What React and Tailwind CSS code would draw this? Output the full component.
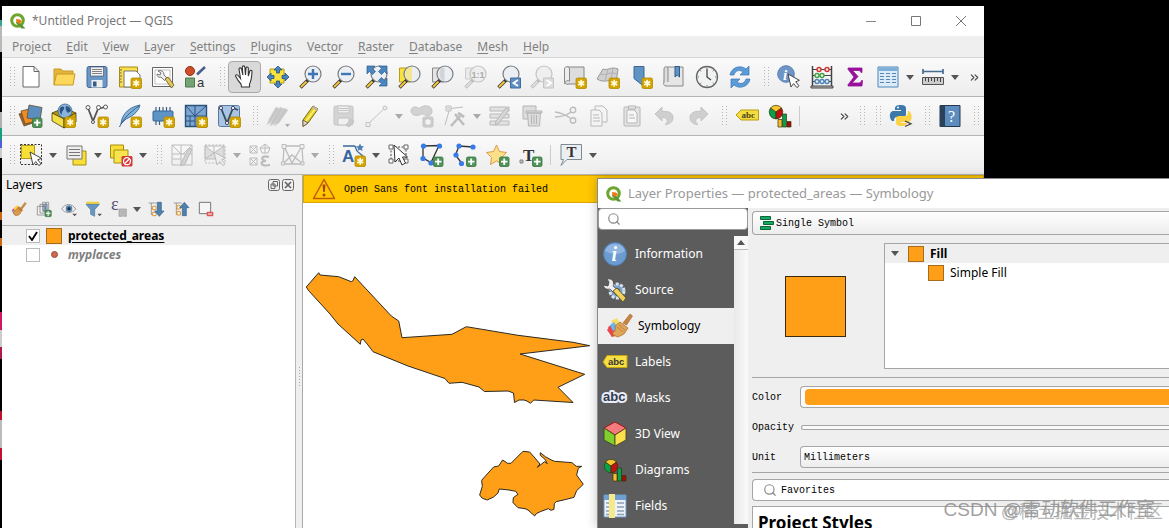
import { ChevronsRight, Search } from "lucide-react";

const ORANGE = "#ff9e17";

// small overlays that sit in the lower right corner of an icon
const NewBadge = () => (
  <g>
    <rect x="13" y="13" width="10.5" height="10.5" rx="1.5" fill="#d4a500" stroke="#b28a00" strokeWidth=".8" />
    <path d="M18.2 14.8v7M15.2 16.5l6 3.5M21.2 16.5l-6 3.5" stroke="#fffbe0" strokeWidth="1.7" />
  </g>
);

const PlusBadge = () => (
  <g>
    <rect x="13.5" y="14" width="9.5" height="9.5" rx="1.5" fill="#4f9358" stroke="#36723f" strokeWidth=".8" />
    <path d="M18.2 15.5v6.5M15 18.7h6.5" stroke="#fff" strokeWidth="1.8" />
  </g>
);

const Lens = ({ faded, children }) => (
  <g>
    <path d="M1.5 22.5 9 15" stroke={faded ? "#bbb" : "#333"} strokeWidth="3.4" />
    <path d="M2 22 7.5 16.5" stroke={faded ? "#ddd" : "#f5c73d"} strokeWidth="2" />
    <circle cx="14" cy="9" r="8" fill={faded ? "#eee" : "#e9eef2"} fillOpacity=".8" stroke={faded ? "#c4c4c4" : "#7a7d80"} strokeWidth="1.2" />
    {children}
  </g>
);

const Cursor = ({ faded }) => (
  <path d="m11 9 3 13 2.6-3.4 3.3 4 2.1-1.8-3.3-4 3.7-1.5z" fill={faded ? "#eee" : "#fff"} stroke={faded ? "#bbb" : "#444"} strokeWidth="1" />
);

const Diagram = () => (
  <g stroke="#34330b" strokeWidth=".7">
    <path d="M8 8V15A7 7 0 0 1 2.5 4z" fill="#08a04b" />
    <path d="M8 8 2.5 4a7 7 0 0 1 11 0z" fill="#fbc52d" />
    <path d="m8 8 5.5-4a7 7 0 0 1-5.5 11z" fill="#c01212" />
    <path d="M10 15.500h4V23h-4z" fill="#fbb92d" />
    <path d="M14.500 10h4v13h-4z" fill="#08a04b" />
    <path d="M19 17.500h4V23h-4z" fill="#a90b0b" />
  </g>
);

const Tag = () => (
  <g>
    <path d="m1 11 5-5h17.500v10H6z" fill="#f4dd3c" stroke="#b79b12" />
    <text x="6.500" y="14" fontSize="9" fontWeight="700" fontFamily="Liberation Serif, serif" fill="#4a4420">abc</text>
  </g>
);

const Broom = () => (
  <g>
    <path d="m1 14 7-6 3 10-5 4z" fill="#f05050" />
    <path d="m4 11 6-5 4 8-5 5z" fill="#fcd545" />
    <path d="m2 16 5 6 3-2-5-7z" fill="#6eb3e8" />
    <path d="m9 11 6 7-5 4c-3 0-6-2-7-4z" fill="#d99a49" stroke="#a86a24" strokeWidth=".7" />
    <path d="m9 10 3-2 6 6-3 3z" fill="#c67a31" />
    <path d="m14 11 7-9 2 2-7 9z" fill="#d2924a" stroke="#9b6225" strokeWidth=".6" />
  </g>
);

// brush over colour swatches, as on the dialog's page list
const BrushSwatches = () => (
  <g>
    <path d="m2 13 6-4 5 12-7 2z" fill="#f05555" />
    <path d="m5 7 6-3 5 9-6 4z" fill="#fbdc62" />
    <path d="m1 16 4-5 5 8-4 4z" fill="#e8474f" />
    <path d="m4 11 4-3 4 6-5 3z" fill="#69b8ef" />
    <path d="m9 12 5-4 8 6-4 6-6 3c-3-1-5-2-6-4 3-1 4-4 3-7z" fill="#dfa65a" stroke="#a86a24" strokeWidth=".7" />
    <path d="m11 13 6 5M13 11l6 5" stroke="#b97a35" strokeWidth=".8" />
    <path d="m17 9 7-9 2.500 2-6 9z" fill="#c98540" stroke="#9b6225" strokeWidth=".6" />
  </g>
);

const InfoDisc = () => (
  <g>
    <circle cx="12" cy="12" r="11.5" fill="#6b9bd1" stroke="#4f7fb8" />
    <path d="M2 9a10.500 10.500 0 0 1 20 0c-5 4-14 4-20 0z" fill="#8fb5e0" />
    <text x="8.500" y="19" fontSize="20" fontWeight="700" fontStyle="italic" fontFamily="Liberation Serif, serif" fill="#fff">i</text>
  </g>
);

const ICONS = {
  "New Project": <path d="M4 1.500h11l5 5v15.500H4zM15 1.500v5h5" fill="#fff" stroke="#666" />,
  "Open Project": (
    <g stroke="#c89b25">
      <path d="M2 20V4h7l2 2h10v4" fill="#e4b53c" />
      <path d="m2 20 2.500-11H23l-2 11z" fill="#fcd75c" />
    </g>
  ),
  "Save Project": (
    <g>
      <rect x="2" y="1.500" width="20" height="21" rx="2" fill="#6b97c4" stroke="#426a96" />
      <path d="M5.500 2h13v9h-13z" fill="#f2f2f2" stroke="#446" strokeWidth=".6" />
      <path d="M7 4.500h10M7 6.500h10M7 8.500h10" stroke="#666" strokeWidth=".8" />
      <path d="M6.500 15h11v7.500h-11z" fill="#eee" />
      <path d="M8 16.500h3.500v5H8z" fill="#355c86" />
    </g>
  ),
  "New Print Layout": (
    <g>
      <path d="M1.500 2h18v20h-18z" fill="#fcdf4c" stroke="#a58b16" />
      <path d="M6 6h12l4 4v12H6z" fill="#fff" stroke="#777" />
      <path d="M2 5h2M2 8h1.500M2 11h2M2 14h1.500M2 17h2" stroke="#665" />
      <NewBadge />
    </g>
  ),
  "Layout Manager": (
    <g>
      <path d="M1.500 2.500h20v19h-20z" fill="#fff" stroke="#666" />
      <path d="M4 5h15v14H4z" fill="none" stroke="#999" strokeWidth=".6" />
      <path d="M7 6c3-1 6 0 6 4l3 3-2.500 2.500L10 12c-3 1-4-1-4-3l3 1 1-2z" fill="#eee" stroke="#555" strokeWidth=".8" />
      <path d="m14 14 3-2 6 8-2.500 3z" fill="#e5c75c" stroke="#604f17" strokeWidth=".8" />
    </g>
  ),
  "Style Manager": (
    <g>
      <circle cx="6" cy="6" r="4.500" fill="#cc4d28" stroke="#8e3317" />
      <path d="M13 9.500 21 2" stroke="#4b5f8a" strokeWidth="2.600" />
      <path d="M1.500 13h9v9h-9z" fill="#74a374" stroke="#4c784c" />
      <text x="13" y="22" fontSize="13" fontFamily="Liberation Sans, sans-serif" fill="#333">a</text>
    </g>
  ),
  "Pan Map": (
    <path
      d="M8.500 22 8 19c-2-2-4-5-5.500-8 0-1.500 2-1.800 3 0l2 2.500L6 4c.2-1.600 2.200-1.500 2.500 0l1.300 6-.5-8c.2-1.500 2.300-1.500 2.500 0l.7 8 .5-7c.2-1.400 2.200-1.300 2.300 0v8l1.500-5c.6-1.200 2.200-.8 2.200.6-.3 5-.5 9-2.500 12.400v3z"
      fill="#fff" stroke="#333" strokeWidth="1.100"
    />
  ),
  "Pan Map to Selection": (
    <g>
      <path d="M4 4h14v14H4z" fill="#fbe13c" stroke="#b59e13" />
      <path d="m12 1 4 4h-2.500v3h-3V5H8zM12 23l-4-4h2.500v-3h3v3H16zM1 12l4-4v2.500h3v3H5V16zM23 12l-4 4v-2.500h-3v-3h3V8z" fill="#4a86c0" stroke="#23507f" strokeWidth=".8" />
    </g>
  ),
  "Zoom In": <Lens><path d="M14 4v10M9 9h10" stroke="#3c76b4" strokeWidth="2.400" /></Lens>,
  "Zoom Out": <Lens><path d="M9 9h10" stroke="#3c76b4" strokeWidth="2.400" /></Lens>,
  "Zoom Full": (
    <Lens>
      <path d="M2 1h8L7.500 3.500l3 3-3 3-3-3L2 9zM22 1v8l-2.500-2.500-3 3-3-3 3-3L14 1zM22 21v-8l-2.500 2.500-3-3-3 3 3 3L14 21z" fill="#4a86c0" stroke="#2a5c8e" strokeWidth=".7" />
    </Lens>
  ),
  "Zoom to Selection": (
    <g><path d="M1.500 3h11v14h-11z" fill="#fbe13c" stroke="#b59e13" /><Lens><path d="M8 7c1-4 4-5 6-5v14c-4 0-6-3-6-9z" fill="#f3e68c" /></Lens></g>
  ),
  "Zoom to Layer": (
    <g><path d="M1.500 3h11v14h-11z" fill="#e4e4e4" stroke="#888" /><Lens><path d="M8.500 7c1-4 4-4.500 5-4.500v13c-4 0-5-4-5-8.500z" fill="#d2d4d6" /></Lens></g>
  ),
  "Zoom to Native Resolution": (
    <g>
      <path d="M1.500 3h9v11h-9z" fill="#eaeaea" stroke="#ccc" />
      <Lens faded><text x="7.500" y="12.500" fontSize="9" fontWeight="700" fontFamily="Liberation Sans, sans-serif" fill="#aaa">1:1</text></Lens>
    </g>
  ),
  "Zoom Last": (
    <Lens><path d="M13.500 13h10v10h-10z" fill="#5f8fc2" stroke="#3e6ea0" /><path d="m21 15-4.500 3 4.500 3" fill="none" stroke="#fff" strokeWidth="1.800" /></Lens>
  ),
  "Zoom Next": (
    <Lens faded><path d="M13.500 13h10v10h-10z" fill="#ddd" stroke="#c4c4c4" /><path d="m16.500 15 4.500 3-4.500 3" fill="none" stroke="#fff" strokeWidth="1.800" /></Lens>
  ),
  "New Map View": (
    <g stroke="#888">
      <path d="M4 2h17v17H6c-3 1-5-1-4-3z" fill="#ddd" />
      <path d="M1.500 17V4c0-3 5-3 5 0v12c-2-1-5 0-5 3" fill="#eee" />
      <NewBadge />
    </g>
  ),
  "New 3D Map View": (
    <g stroke="#999">
      <path d="M7 4c5 2 8-3 15 0l-2 13c-7-4-11 2-19-3z" fill="#d0d0d0" />
      <path d="M4 9c6 2 10-3 17 0M12 4l-3 12M17 3l-2 12" fill="none" stroke="#b0b0b0" />
      <NewBadge />
    </g>
  ),
  "New Spatial Bookmark": <g><path d="M5 1.500h10v20l-5-4-5-4z" fill="#5f93c4" stroke="#3a6895" /><NewBadge /></g>,
  "Show Spatial Bookmarks": (
    <g stroke="#888">
      <path d="M5 2h16v19H4c-2 0-3-2-2-4z" fill="#e6e6e6" />
      <path d="M2 17V4c0-3 4-3 4 0v13" fill="#ddd" />
      <path d="M13 1.500h4.500V12l-2.200-2L13 12z" fill="#5f93c4" stroke="#2f5a86" />
    </g>
  ),
  "Temporal Controller": (
    <g>
      <circle cx="12" cy="12" r="10.500" fill="#f1f3f3" stroke="#666" strokeWidth="1.300" />
      <path d="M12 4v8l4 3" fill="none" stroke="#444" strokeWidth="1.300" />
      <path d="M12 2.500v1.500M12 20v1.500M2.500 12H4M20 12h1.500M5.300 5.300l1 1M18.700 5.300l-1 1M5.300 18.700l1-1M18.700 18.700l-1-1" stroke="#777" />
    </g>
  ),
  Refresh: (
    <g fill="#5b9bd8" stroke="#3a74b4" strokeWidth=".7">
      <path d="M2 10C3 3 12-1 18 4l3-3v9h-9l3-3c-4-3-8-1-9 3z" />
      <path d="M22 14c-1 7-10 11-16 6l-3 3v-9h9l-3 3c4 3 8 1 9-3z" />
    </g>
  ),
  "Identify Features": (
    <g>
      <circle cx="9" cy="9" r="8.300" fill="#6e95c6" stroke="#5680b3" />
      <text x="6" y="14.500" fontSize="15" fontWeight="700" fontStyle="italic" fontFamily="Liberation Serif, serif" fill="#fff">i</text>
      <Cursor />
    </g>
  ),
  "Field Calculator": (
    <g fill="none" stroke="#444">
      <path d="M2.500 1v20M21.500 1v20" strokeWidth="1.500" />
      <path d="M1 21h22v2H1z" fill="#bbb" />
      <path d="M3 4.500h18M3 10.500h18M3 16.500h18" />
      <g stroke="#d33232" fill="#fce4e4" strokeWidth="1.400"><circle cx="9" cy="4.500" r="2" /><circle cx="17" cy="4.500" r="2" /></g>
      <g stroke="#43a047" fill="#e6f5e6" strokeWidth="1.400"><circle cx="7" cy="10.500" r="2" /><circle cx="12" cy="10.500" r="2" /></g>
      <g stroke="#4f83b5" fill="#e4eef8" strokeWidth="1.400"><circle cx="7" cy="16.500" r="2" /><circle cx="12" cy="16.500" r="2" /><circle cx="17" cy="16.500" r="2" /></g>
    </g>
  ),
  "Statistical Summary": <path d="M5 3h14v4.500h-1c-.5-1.500-1.300-2-3-2H9.500l5.500 6L9 18h6.500c2 0 2.600-1 3-2.500h1L19 21H5v-1.200L11 12 5 4.200z" fill="#98109c" stroke="#98109c" strokeWidth=".8" />,
  "Open Attribute Table": (
    <g>
      <path d="M2 2h20v20H2z" fill="#dcebf8" stroke="#4b85bb" />
      <path d="M2.500 2.500h19v3.500h-19z" fill="#7faed9" />
      <path d="M4 8.500h4M10 8.500h4M16 8.500h4M4 11.500h4M10 11.500h4M16 11.500h4M4 14.500h4M10 14.500h4M16 14.500h4M4 17.500h4M10 17.500h4M16 17.500h4" stroke="#5686b4" />
    </g>
  ),
  "Measure Line": (
    <g>
      <path d="M2.500 6.500h19M2 4v5M22 4v5" stroke="#456c91" strokeWidth="1.700" />
      <path d="M1.500 12.500h21v7h-21z" fill="#ccc" stroke="#555" />
      <path d="M4.500 13v3M7.500 13v4M10.500 13v3M13.500 13v4M16.500 13v3M19.500 13v4" stroke="#444" />
    </g>
  ),
  "Data Source Manager": (
    <g stroke="#604e32" strokeWidth=".8">
      <path d="m0 10 9-4 5 13-9 3z" fill="#a7611f" />
      <path d="m2 7 12-3 4 13-12 3z" fill="#f08d22" />
      <path d="m10 1 13 2.500-2 13L8 14z" fill="#5b8dbd" />
      <PlusBadge />
    </g>
  ),
  "New Geopackage Layer": (
    <g stroke="#453d10" strokeWidth=".8">
      <path d="m0 9 12-5 12 5-12 7z" fill="#b8940c" />
      <circle cx="13" cy="7" r="7" fill="#8ab4de" stroke="#3d6288" />
      <path d="M8 4c3-3 5-1 4 1s-3 3-2 6c-2-1-3-4-2-7zM14 2c3 0 5 3 5 5l-3 2c-2-2-3-4-2-7z" fill="#2d5580" stroke="none" />
      <path d="m0 9 12 6v9L0 17z" fill="#f3de45" />
      <path d="m24 9-12 6v9l12-6z" fill="#d3ac10" />
      <NewBadge />
    </g>
  ),
  "New Shapefile Layer": (
    <g>
      <path d="m3 4 5 13 5-12 7-2" fill="none" stroke="#555" strokeWidth="1.800" />
      <g fill="#fff" stroke="#555"><circle cx="3" cy="3.500" r="2" /><circle cx="13.500" cy="3.500" r="2" /><circle cx="20.500" cy="3" r="2" /><circle cx="8" cy="18" r="1.500" /></g>
      <NewBadge />
    </g>
  ),
  "New SpatiaLite Layer": (
    <g>
      <path d="M3 20C4 9 12 3 22 1c-1 5-5 10-14 14z" fill="#83b2dc" stroke="#41709d" />
      <path d="M1.500 23C5 15 12 8 21 2" fill="none" stroke="#345f89" />
      <NewBadge />
    </g>
  ),
  "New Temporary Scratch Layer": (
    <g>
      <path d="M5 3v5M8.500 3v5M12 3v5M15.500 3v5M19 3v5M5 16v5M8.500 16v5" stroke="#3e5f83" strokeWidth="1.200" />
      <rect x="2" y="7" width="20" height="10" rx="1" fill="#5e93c6" stroke="#346596" />
      <NewBadge />
    </g>
  ),
  "New Mesh Layer": (
    <g>
      <path d="M1.500 1.500h21v21h-21z" fill="#7ea6d2" stroke="#29517c" strokeWidth="1.400" />
      <path d="M11 1.500v21M1.500 12h21M1.500 1.500 11 12M22 2 11 12M1.500 17H11M6 12v10" fill="none" stroke="#29517c" />
      <NewBadge />
    </g>
  ),
  "New Virtual Layer": (
    <g>
      <rect x="1.500" y="1.500" width="21" height="21" rx="2" fill="#a9c5e3" stroke="#567a9f" />
      <path d="m4 4 6 15 6-15 5 2" fill="none" stroke="#384b5e" strokeWidth="1.800" />
      <g fill="#fff" stroke="#446"><circle cx="4" cy="4" r="1.600" /><circle cx="16" cy="4" r="1.600" /><circle cx="10" cy="19" r="1.600" /></g>
      <NewBadge />
    </g>
  ),
  "Current Edits": (
    <g fill="#c6c6c6" stroke="#d8d8d8" strokeWidth=".6">
      <path d="m1 21 2-6L10 3l4 2L5 18z" /><path d="m4 22 2-6 8-13 4 2-8 14z" /><path d="m8 22 2-5 8-13 4 2-9 13z" />
      <path d="M19 20h5l-2.500 3z" fill="#999" />
    </g>
  ),
  "Toggle Editing": (
    <g>
      <path d="m4 16 10-14 5 3L9 19l-5 3.500z" fill="#e4cd27" stroke="#776a13" />
      <path d="m7 17 10-13" stroke="#fff27b" strokeWidth="1.500" />
      <path d="m4 16 5 3-5 3.500z" fill="#e8d6b4" stroke="#555" strokeWidth=".8" />
      <path d="m14 2 5 3-1 2-5-3z" fill="#c0b7ac" />
    </g>
  ),
  "Save Layer Edits": (
    <g stroke="#c4c4c4">
      <rect x="2" y="2" width="19" height="19" rx="1.500" fill="#d4d4d4" />
      <path d="M6 2h11v7H6zM6 14h11v7H6z" fill="#f0f0f0" /><path d="M7 4.500h9M7 6.500h9" />
      <path d="m14 21 5-6 3 2-5 6z" fill="#c9c9c9" />
    </g>
  ),
  "Digitize with Segment": (
    <g stroke="#c2c2c2" fill="#eee"><path d="m3 20 17-16" /><path d="M1 18.500h4v4H1z" /><circle cx="20" cy="4" r="2" /></g>
  ),
  "Add Record": (
    <g fill="#d2d2d2" stroke="#c4c4c4">
      <path d="M1 7c0-4 4-5 7-3 2 1 4-3 9-2 6 0 7 9 1 10-3 0-4-3-7-2-4 3-10 1-10-3z" />
      <rect x="13" y="13" width="10" height="10" rx="1.500" fill="#ccc" /><path d="M18 15v6M15.500 16.500l5 3M20.500 16.500l-5 3" stroke="#f5f5f5" strokeWidth="1.500" />
    </g>
  ),
  "Vertex Tool": (
    <g fill="none" stroke="#bdbdbd">
      <path d="M3 2h5v5H3zM8 4.500 20 3M6 7 2 21" /><circle cx="5.500" cy="4.500" r="1" />
      <path d="m8 22 9-10M12 10l9 11" strokeWidth="2.500" /><path d="m15 9 6 4" strokeWidth="3" />
    </g>
  ),
  "Modify Attributes": (
    <g fill="#e2e2e2" stroke="#b9b9b9"><path d="M2 3h19v4H2zM2 10h19v4H2zM2 17h19v4H2z" /><path d="m8 17 10-13 3 2-10 13-4 2z" fill="#d6d6d6" /></g>
  ),
  "Delete Selected": (
    <g fill="#ddd" stroke="#b5b5b5"><path d="M2 2h13v13H2z" /><path d="M5 7h16v2H5zM6.500 9h13l-1 13h-11zM10.500 11v9M13 11v9M15.500 11v9" /></g>
  ),
  "Cut Features": (
    <g fill="none" stroke="#bdbdbd" strokeWidth="1.400"><path d="M1 8c7 1 11 3 15 6M1 13c7 0 12-2 16-5" /><circle cx="19" cy="6" r="2.700" /><circle cx="19" cy="16.500" r="2.700" /></g>
  ),
  "Copy Features": (
    <g fill="#f4f4f4" stroke="#b9b9b9"><path d="M8 2h8l4 4v12H8z" /><path d="M4 6h8l3 3v13H4zM6 11h6M6 14h7M6 17h7" /></g>
  ),
  "Paste Features": (
    <g fill="#e4e4e4" stroke="#b5b5b5"><rect x="4" y="3" width="16" height="19" rx="1" /><path d="M7 6h7l3 3v10H7z" fill="#f6f6f6" /><path d="M8.500 2h7v3h-7zM9 11h5M9 14h6" /></g>
  ),
  Undo: <path d="m2 10 7-7v4.500c7-1 11 2 11 6 0 4-3 7-8 7 3-2 4-7-3-7V17z" fill="#cfcfcf" stroke="#c4c4c4" />,
  Redo: <path d="m22 10-7-7v4.500c-7-1-11 2-11 6 0 4 3 7 8 7-3-2-4-7 3-7V17z" fill="#cfcfcf" stroke="#c4c4c4" />,
  "Layer Labeling": <Tag />,
  "Layer Diagrams": <Diagram />,
  "Python Console": (
    <g>
      <path d="M11 1c5 0 6 1 6 4v5c0 2-1 3-3 3H8c-2 0-3 1-3 4H3c-3-3-3-9 1-10h8V6H6V4c0-2 2-3 5-3z" fill="#3c78a9" />
      <path d="M13 22c-5 0-6-1-6-4v-3c0-2 1-3 3-3h6c2 0 3-1 3-5h1c3 2 4 9 0 11h-8v1h6c0 2-2 3-5 3z" fill="#fdd244" />
      <circle cx="9" cy="3.500" r="1" fill="#fff" />
      <path d="m16 17 6 2.800-6 2.700" fill="none" stroke="#444" strokeWidth="1.300" />
    </g>
  ),
  "Help Contents": (
    <g>
      <path d="M2 1.500h20v21H2z" fill="#5d8cbe" stroke="#25384d" /><path d="M2 1.500h5v21H2z" fill="#2b4159" />
      <text x="10" y="18" fontSize="16" fontFamily="Liberation Serif, serif" fill="#fff">?</text>
    </g>
  ),
  "Select Features": (
    <g><path d="M1.500 1.500h21v20h-21z" fill="none" stroke="#333" strokeDasharray="2 1.500" /><path d="M2.500 2.500h13v13h-13z" fill="#f7df37" stroke="#b39c18" /><Cursor /></g>
  ),
  "Select by Value": (
    <g><path d="M9 8h13v14H9z" fill="#f7df37" stroke="#a68d12" /><path d="M3 3h15v13H3z" fill="#eee" stroke="#777" /><path d="M5 6.500h11M5 9.500h11M5 12.500h11" stroke="#777" /></g>
  ),
  "Deselect Features": (
    <g><path d="M1.500 2h13v13h-13z" fill="#f7df37" stroke="#a68d12" /><path d="M5 7h14v13H5z" fill="#f9e44d" stroke="#a68d12" /><rect x="12.500" y="13" width="11" height="10.500" rx="1.500" fill="#d63636" /><circle cx="18" cy="18.200" r="3.500" fill="none" stroke="#fff" strokeWidth="1.300" /><path d="m15.500 20.700 5-5" stroke="#fff" strokeWidth="1.300" /></g>
  ),
  "Edit Mesh": (
    <g fill="none" stroke="#bcbcbc"><path d="M2 2h20v20H2zM2 11h20M11 2v20M2 2l9 9M22 2l-9 9M2 16h9" /><path d="m11 20 8-15 3 1-7 15-4 2z" fill="#d2d2d2" /></g>
  ),
  "Select Mesh": (
    <g fill="none" stroke="#bcbcbc"><path d="M2 2h20v18H2z" strokeDasharray="2 1.500" /><path d="M2 3h19v13H2zM2 3l9 7 10-7M2 16l9-6M11 3v7" fill="#ddd" /><Cursor faded /></g>
  ),
  "Transform Mesh": (
    <g fill="none" stroke="#bcbcbc"><path d="M2 3h7v7H2zM2 3l7 7M9 3l-7 7M2 15h7v7H2zM2 15l7 7M9 15l-7 7M17 1l5 4-2 5h-6l-2-5zM12 5h10M17 1v9" /><path d="M21 14c-8-2-9 3-3 4-7 0-6 6 4 4" strokeWidth="2.200" /></g>
  ),
  "Force by Lines": (
    <g fill="none" stroke="#bcbcbc"><path d="M3 3h18l1 18H2zM3 3l8 17L21 3M2 21l9-9 11 9" strokeWidth="1.300" /><path d="M1 1.500h4v4H1zM19 1.500h4v4h-4zM0.500 19h3v3h-3zM20 19h3v3h-3z" fill="#eee" /></g>
  ),
  "New Annotation Layer": (
    <g><path d="M1 3h11c3 0 1 5 4 6l5 4" fill="none" stroke="#3a6797" strokeWidth="1.300" /><path d="m18 .5 1.300 2.400 2.700.4-2 2 .5 2.700-2.500-1.300L15.500 8l.5-2.700-2-2 2.700-.4z" fill="#4e81b7" /><text x="0" y="19" fontSize="17" fontWeight="700" fontFamily="Liberation Sans, sans-serif" fill="#3467a1">A</text><NewBadge /></g>
  ),
  "Modify Annotations": (
    <g><path d="M4 4h15v14H4z" fill="none" stroke="#444" strokeDasharray="2 1.500" /><path d="M2 2h4v4H2zM17 2h4v4h-4zM2 16h4v4H2zM17 16h4v4h-4z" fill="#fff" stroke="#666" /><path d="m7 2 1 17 4-4 3 7 3.500-2-3-6h5z" fill="#fff" stroke="#333" /></g>
  ),
  "Create Polygon Annotation": (
    <g><path d="m3 3 16-.5-8 17L3 15z" fill="none" stroke="#333" strokeWidth="1.300" /><g fill="#377be8"><circle cx="3.500" cy="3" r="2.600" /><circle cx="19.500" cy="3" r="2.600" /><circle cx="3" cy="15.500" r="2.600" /><circle cx="11" cy="20" r="2.600" /></g><PlusBadge /></g>
  ),
  "Create Line Annotation": (
    <g><path d="M20 4 6 3 2.500 12l6 8" fill="none" stroke="#333" strokeWidth="1.300" /><g fill="#377be8"><circle cx="6" cy="3" r="2.600" /><circle cx="20" cy="4" r="2.600" /><circle cx="3" cy="12" r="2.600" /><circle cx="8.500" cy="20.500" r="2.600" /></g><PlusBadge /></g>
  ),
  "Create Marker Annotation": (
    <g><path d="m10.500 2 3 6.500 7 1-5 5 1 7-6-3.500-6 3.500 1-7-5-5 7-1z" fill="#fbe08a" stroke="#dc9b4a" /><PlusBadge /></g>
  ),
  "Create Text Annotation": (
    <g><path d="M1 17h3v3H1z" fill="#bbb" stroke="#888" /><text x="4" y="18" fontSize="17" fontWeight="700" fontFamily="Liberation Serif, serif" fill="#333">T</text><PlusBadge /></g>
  ),
  "Text Annotation": (
    <g><path d="M2 1.500h20.500v15H8l-6 6 2.500-6H2z" fill="#eceff1" stroke="#7c8b92" /><text x="7.500" y="14" fontSize="15" fontWeight="700" fontFamily="Liberation Serif, serif" fill="#333">T</text></g>
  ),
  // layers panel
  "Open Layer Styling": <Broom />,
  "Add Group": (
    <g><path d="M2 8h12v13H2z" fill="#eee" stroke="#777" /><path d="M6 5h11v13H6z" fill="none" stroke="#777" /><path d="M10 2h9v13h-9z" fill="none" stroke="#777" /><path d="M12 5v11M15 3v12" stroke="#3e6995" strokeWidth="1.600" /><PlusBadge /></g>
  ),
  "Manage Map Themes": (
    <g><path d="M1 12C6 3 17 3 22 12 17 19 6 19 1 12z" fill="#f2f2f2" stroke="#999" strokeWidth="1.500" /><circle cx="12" cy="11.500" r="5" fill="#5d89b2" /><circle cx="12" cy="11.500" r="2.500" fill="#1e3349" /><path d="M17 19h7l-3.500 4z" fill="#555" /></g>
  ),
  "Filter Legend": (
    <g><path d="M0 1h20v4H0z" fill="#f0d348" /><path d="M0 5h20l-7 8v10l-6-3v-7z" fill="#6996bf" stroke="#45739e" /><path d="M17 19h7l-3.500 4z" fill="#555" /></g>
  ),
  "Filter by Expression": (
    <g><text x="0" y="14" fontSize="27" fontFamily="Liberation Serif, serif" fill="#555078">ε</text><path d="M12 12h11v11h-4v-7h-2v7h-5z" fill="#bbb" stroke="#999" /></g>
  ),
  "Expand All": (
    <g><path d="M1 3h12M5 3v18M5 11h5M5 20h5" stroke="#777" /><path d="M7 8h5v5H7zM7 17h5v5H7z" fill="#fff" stroke="#e2932b" strokeWidth="1.500" /><path d="M14 2h6v13h4l-7 8-7-8h4z" fill="#4f81b1" stroke="#315f8d" /></g>
  ),
  "Collapse All": (
    <g><path d="M1 3h12M5 3v18M5 11h5M5 20h5" stroke="#777" /><path d="M6 7h5v5H6zM6 16h5v5H6z" fill="#fff" stroke="#e2932b" strokeWidth="1.500" /><path d="M14 22h6V10h4l-7-8-7 8h4z" fill="#4f81b1" stroke="#315f8d" /></g>
  ),
  "Remove Layer": (
    <g><path d="M2 2h17v17H2z" fill="#f5f5f5" stroke="#777" strokeWidth="1.500" /><rect x="13" y="16" width="10" height="7" rx="1.500" fill="#dd5555" /><path d="M15 19.500h6" stroke="#fff" strokeWidth="1.500" /></g>
  ),
  // dialog pages
  Information: <InfoDisc />,
  Source: (
    <g>
      <circle cx="14" cy="13" r="7" fill="#7ba3cb" stroke="#d6e2ee" strokeWidth="3" strokeDasharray="3 1.500" />
      <circle cx="14" cy="13" r="3" fill="#5c5c5c" />
      <path d="M4 1c5-1 8 3 6 7l7 6-3 4-7-7c-4 1-6-1-7-4l5 1 1-4z" fill="#eee" stroke="#444" strokeWidth=".8" />
      <path d="m10 13 4-3 9 10-3 4z" fill="#efd15c" stroke="#564b1a" strokeWidth=".8" />
    </g>
  ),
  Symbology: <BrushSwatches />,
  Labels: (
    <g>
      <path d="m0 12 4-6.500h20v12H4z" fill="#f5df45" stroke="#c4a40e" />
      <text x="5" y="15" fontSize="9.500" fontWeight="700" fontFamily="Liberation Sans, sans-serif" fill="#333">abc</text>
    </g>
  ),
  Masks: (
    <text x="0" y="15" fontSize="13" fontWeight="700" fontFamily="Liberation Sans, sans-serif" fill="#333b49" stroke="#e8ecfa" strokeWidth="4" strokeLinejoin="round" paintOrder="stroke">abc</text>
  ),
  "3D View": (
    <g stroke="#3b3b20" strokeWidth=".8"><path d="m12 0 11 6-11 7L1 6z" fill="#f47b7b" stroke="#a00" /><path d="m1 6 11 7v11L1 18z" fill="#80cf2f" /><path d="m23 6-11 7v11l11-6z" fill="#fbe04c" /></g>
  ),
  Diagrams: <Diagram />,
  Fields: (
    <g><path d="M1 1h22v22H1z" fill="#eef3f9" stroke="#6894c4" /><path d="M1 1h22v5H1z" fill="#6fa0d3" /><path d="M3 9h4M14 9h7M3 13h4M14 13h7M3 17h4M14 17h7M3 20.500h4M14 20.500h7" stroke="#8aa0b7" strokeWidth="1.300" /><path d="M6 0h6v24H6z" fill="#f6e98b" /></g>
  ),
};

const TOOLBARS = [
  [
    "New Project", "Open Project", "Save Project", "New Print Layout", "Layout Manager", "Style Manager", "grip",
    "Pan Map", "Pan Map to Selection", "Zoom In", "Zoom Out", "Zoom Full", "Zoom to Selection", "Zoom to Layer",
    "Zoom to Native Resolution", "Zoom Last", "Zoom Next", "New Map View", "New 3D Map View", "New Spatial Bookmark",
    "Show Spatial Bookmarks", "Temporal Controller", "Refresh", "grip", "Identify Features", "Field Calculator",
    "Statistical Summary", "Open Attribute Table", "drop", "Measure Line", "drop", "space", "more",
  ],
  [
    "Data Source Manager", "New Geopackage Layer", "New Shapefile Layer", "New SpatiaLite Layer",
    "New Temporary Scratch Layer", "New Mesh Layer", "New Virtual Layer", "grip", "Current Edits", "Toggle Editing",
    "Save Layer Edits", "Digitize with Segment", "drop-off", "Add Record", "Vertex Tool", "drop-off", "Modify Attributes",
    "Delete Selected", "Cut Features", "Copy Features", "Paste Features", "Undo", "Redo", "grip", "Layer Labeling",
    "Layer Diagrams", "sep", "space", "more", "grip", "grip", "Python Console", "grip", "Help Contents", "grip",
  ],
  [
    "Select Features", "drop", "Select by Value", "drop", "Deselect Features", "drop", "grip", "Edit Mesh",
    "Select Mesh", "drop-off", "Transform Mesh", "Force by Lines", "drop-off", "grip", "New Annotation Layer", "drop",
    "Modify Annotations", "Create Polygon Annotation", "Create Line Annotation", "Create Marker Annotation",
    "Create Text Annotation", "sep", "Text Annotation", "drop",
  ],
];

const MENUS = ["Project", "Edit", "View", "Layer", "Settings", "Plugins", "Vector", "Raster", "Database", "Mesh", "Help"];
// index of the underlined letter where it is not the first
const MNEMONIC = { Project: 3, Vector: 4 };

const LAYER_TOOLS = [
  "Open Layer Styling", "Add Group", "Manage Map Themes", "Filter Legend", "Filter by Expression", "drop",
  "Expand All", "Collapse All", "Remove Layer",
];

const PAGES = ["Information", "Source", "Symbology", "Labels", "Masks", "3D View", "Diagrams", "Fields"];

// slivers of the desktop behind the window: [height, colour]
const DESKTOP = [
  [14, "#000"], [6, "#35a58c"], [26, "#b8b8b8"], [60, "#000"], [16, "#b0b0b0"], [12, "#18a07c"], [8, "#5060d8"],
  [10, "#ccc"], [54, "#000"], [8, "#c86a10"], [18, "#000"], [8, "#c86a10"], [66, "#000"], [18, "#d01860"],
  [17, "#ccc"], [12, "#b01850"], [52, "#000"], [9, "#c01030"], [28, "#bbb"], [12, "#c01030"],
];

function Icon({ name, className = "size-6" }) {
  return (
    <svg viewBox="0 0 24 24" fill="none" className={`${className} shrink-0 overflow-visible`} aria-hidden="true">
      {ICONS[name]}
    </svg>
  );
}

function QgisLogo() {
  return (
    <svg viewBox="0 0 16 16" className="size-4 shrink-0" aria-hidden="true">
      <circle cx="7.500" cy="7.500" r="5.800" fill="none" stroke="#6da52f" strokeWidth="3" />
      <path d="m7 7 8.500 8.500h-4L6 10z" fill="#589632" />
      <path d="m6 6 4 .5 2 2L9 11 6.500 9z" fill="#ee7913" />
    </svg>
  );
}

function Caret({ off }) {
  return (
    <svg viewBox="0 0 8 5" className="h-[5px] w-2" aria-hidden="true">
      <path d="M0 0h8L4 5z" fill={off ? "#aaa" : "#555"} />
    </svg>
  );
}

function Grip() {
  return (
    <span className="flex w-4 shrink-0 justify-center pl-1">
      <svg viewBox="0 0 5 20" className="h-5 w-[5px]" aria-hidden="true">
        <path d="M.5 0v20M4.500 0v20" stroke="#b5b5b5" strokeDasharray="1 2" />
      </svg>
    </span>
  );
}

function ToolItem({ name }) {
  if (name === "grip") return <Grip />;
  if (name === "sep") return <span className="mx-[3px] h-5 w-px shrink-0 bg-[#ccc]" />;
  if (name === "space") return <span className="flex-1" />;
  if (name === "more") {
    return (
      <button aria-label="More tools" className="flex w-4 shrink-0 justify-center text-[#444]">
        <ChevronsRight size={13} />
      </button>
    );
  }
  if (name.startsWith("drop")) {
    return (
      <button aria-label="Options" className="flex h-6 w-3 shrink-0 items-center justify-center">
        <Caret off={name === "drop-off"} />
      </button>
    );
  }
  const active = name === "Pan Map" ? "rounded-sm border border-[#aaa] bg-[#d9d9d9]" : "";
  return (
    <button aria-label={name} className={`flex h-8 w-[33px] shrink-0 items-center justify-center ${active}`}>
      <Icon name={name} />
    </button>
  );
}

function MenuLabel({ text }) {
  const i = MNEMONIC[text] ?? 0;
  return (
    <>
      {text.slice(0, i)}
      <span className="underline underline-offset-2">{text[i]}</span>
      {text.slice(i + 1)}
    </>
  );
}

function TitleBar() {
  return (
    <header className="flex h-[30px] shrink-0 items-center bg-white pl-2 text-[#777]">
      <QgisLogo />
      <h1 className="ml-1.5 flex-1 text-xs">*Untitled Project — QGIS</h1>
      <button aria-label="Minimize" className="flex w-[45px] justify-center">
        <svg viewBox="0 0 10 10" className="size-[10px]"><path d="M0 5.500h10" stroke="#888" /></svg>
      </button>
      <button aria-label="Maximize" className="flex w-[45px] justify-center">
        <svg viewBox="0 0 10 10" className="size-[10px]"><path d="M.5.500h9v9h-9z" fill="none" stroke="#777" /></svg>
      </button>
      <button aria-label="Close" className="flex w-[46px] justify-center">
        <svg viewBox="0 0 10 10" className="size-[10px]"><path d="m0 0 10 10M10 0 0 10" stroke="#777" /></svg>
      </button>
    </header>
  );
}

function LayersPanel() {
  return (
    <aside className="flex w-[300px] shrink-0 flex-col bg-[#efefef]">
      <div className="flex h-5 items-center gap-0.5 pl-1 pr-2">
        <h2 className="flex-1 text-xs text-black">Layers</h2>
        <button aria-label="Float panel">
          <svg viewBox="0 0 12 12" className="size-3" fill="none" stroke="#666">
            <rect x=".5" y=".5" width="11" height="11" rx="2" /><path d="M5 2.500h4.500V7H5zM3 5h4v4.500H3z" />
          </svg>
        </button>
        <button aria-label="Close panel">
          <svg viewBox="0 0 12 12" className="size-3" fill="none" stroke="#666">
            <rect x=".5" y=".5" width="11" height="11" rx="2" /><path d="m3 3 6 6M9 3 3 9" strokeWidth="1.700" />
          </svg>
        </button>
      </div>
      <div className="flex h-[30px] items-center pb-0.5 pl-1">
        {LAYER_TOOLS.map((name) =>
          name === "drop" ? (
            <ToolItem key={name} name={name} />
          ) : (
            <button key={name} aria-label={name} className="flex w-[25px] justify-center">
              <Icon name={name} className="size-4" />
            </button>
          ),
        )}
      </div>
      <div className="flex min-h-0 flex-1">
        <ul className="flex-1 border-r border-t border-[#b5b5b5] bg-white">
          <li className="flex h-[19px] items-center bg-[#efefef] pl-6">
            <input id="layer-areas" type="checkbox" defaultChecked className="peer sr-only" />
            <label htmlFor="layer-areas" className="flex items-center gap-1.5 text-xs font-bold text-black underline underline-offset-2">
              <span className="flex size-[14px] items-center justify-center border border-[#bbb] bg-white">
                <svg viewBox="0 0 10 10" className="size-[10px]"><path d="m1 5 3 4 5-8" fill="none" stroke="#000" strokeWidth="1.800" /></svg>
              </span>
              <span className="size-4 border border-[#a66b1c] bg-[#ff9e17]" />
              protected_areas
            </label>
          </li>
          <li className="flex h-[19px] items-center pl-6">
            <input id="layer-places" type="checkbox" className="peer sr-only" />
            <label htmlFor="layer-places" className="flex items-center gap-1.5 text-xs font-bold italic text-[#808080]">
              <span className="size-[14px] border border-[#bbb] bg-white" />
              <span className="flex w-4 justify-center">
                <span className="size-[7px] rounded-full border border-[#8c5140] bg-[#d8654c]" />
              </span>
              myplaces
            </label>
          </li>
        </ul>
        <div className="flex w-[6px] items-center justify-center">
          <svg viewBox="0 0 3 20" className="h-5 w-[3px]"><path d="M1.500 0v20" stroke="#aaa" strokeDasharray="1 2" /></svg>
        </div>
      </div>
    </aside>
  );
}

function MapCanvas() {
  return (
    <main className="flex min-w-0 flex-1 flex-col border-l border-[#aaa] bg-white">
      <div className="flex h-[28px] shrink-0 items-center gap-2 border border-[#d8a800] bg-[#ffc800] pl-2">
        <svg viewBox="0 0 24 22" className="h-[22px] w-6" aria-hidden="true">
          <path d="M12 1.500 22.500 20.500h-21z" fill="none" stroke="#c25a08" strokeWidth="1.500" strokeLinejoin="round" />
          <path d="M10.500 6.500h3l-.7 7.500h-1.600z" fill="#a5480a" />
          <circle cx="12" cy="17" r="1.500" fill="#a5480a" />
        </svg>
        <p className="font-['Liberation_Mono',monospace] text-[10px] text-black">Open Sans font installation failed</p>
      </div>
      {/* map units are window pixels */}
      <svg viewBox="303 203 295 325" className="h-[325px] w-[295px] shrink-0" fill={ORANGE} stroke="#2b2b22" strokeLinejoin="round">
        <path d="M306.300 287 318.700 272.700 320 275 338.700 276.700 351.300 281.700 353 280.700 354.700 276.700 391.300 316 398.700 321 402 337.700 452 334.300 466.300 326.700 518 335.300 573 342.300 589.700 345.700 520 354 584.700 374.300 558 387.300 573 402.500 533.700 400 530.500 403.300 527 401 524 400 519 400 514.500 402.500 513.500 393 508 391 484.500 391.500 479 387 462 382.300 449 383.300 445 378.500 408 366 373 351.700 368 345 363 339 361 340 360.300 344.300 338 324 330 314 308.700 290.700z" />
        <g transform="translate(298 350) scale(.3333)" strokeWidth="3">
          <path d="m675 304 20 2 16 18 15 18-8 10 22-17 8 6-7-13-14-12v-8l15 12 20 11 8 3 52 4 13 11h16l-10 6-5 20 20 28-20 19-8 20-27 7-26 6-6 6-1 17-9 3-8-5-24 9-12 6-5 7-20-18-9-4-21-3-15-15 1-15 14-10-7-9-20-4-29-3-4 12-13 12-19 9-15-5-8-10 8-26-2-18 14-16 22-24 15-3 12-18 15 10h10z" />
        </g>
      </svg>
    </main>
  );
}

function MainWindow() {
  return (
    <div className="flex min-w-0 flex-1 flex-col bg-[#f0f0f0]">
      <TitleBar />
      <nav className="flex h-[22px] shrink-0 items-center gap-[15px] border-b border-[#d5d5d5] bg-[#efefef] pl-2.5 text-xs text-[#808080]">
        {MENUS.map((m) => (
          <button key={m}><MenuLabel text={m} /></button>
        ))}
      </nav>
      {TOOLBARS.map((items, row) => (
        <div key={row} className="flex h-[39px] shrink-0 items-center border-b border-[#b5b5b5] bg-gradient-to-b from-[#fafafa] to-[#ededed] pr-0.5">
          <span className="-mr-1 flex"><Grip /></span>
          {items.map((name, i) => <ToolItem key={i} name={name} />)}
        </div>
      ))}
      <div className="flex min-h-0 flex-1">
        <LayersPanel />
        <MapCanvas />
      </div>
    </div>
  );
}

function PageList() {
  return (
    <div className="flex w-[150px] shrink-0 flex-col bg-[#5c5c5c]">
      <label className="flex h-[22px] shrink-0 items-center rounded-sm border border-[#999] bg-white pl-2">
        <Search size={14} className="shrink-0 text-[#888]" />
        <input aria-label="Search pages" className="w-full min-w-0 outline-none" />
      </label>
      <div className="mt-1.5 flex">
        <ul className="flex-1">
          {PAGES.map((p) => (
            <li key={p}>
              <button
                className={`flex h-9 w-full items-center gap-2 text-xs ${
                  p === "Symbology" ? "bg-[#efefef] pl-2 text-black" : "pl-[5px] text-white"
                }`}
              >
                <Icon name={p} />
                {p}
              </button>
            </li>
          ))}
        </ul>
        <div className="w-[14px] bg-gradient-to-r from-[#e9e9e9] to-[#fafafa]">
          <button aria-label="Scroll up" className="flex h-[14px] w-full items-center justify-center border-b border-[#bbb] bg-[#f8f8f8]">
            <span className="rotate-180"><Caret /></span>
          </button>
        </div>
      </div>
    </div>
  );
}

function SymbologyPage() {
  return (
    <div className="flex min-w-0 flex-1 flex-col bg-[#efefef] pl-1 pt-[3px] font-['Liberation_Mono',monospace] text-[10px] text-black">
      <div className="flex h-6 shrink-0 items-center rounded-l-sm border border-r-0 border-[#a5a5a5] bg-gradient-to-b from-white to-[#ededed] pl-[7px]">
        <svg viewBox="0 0 14 14" className="size-[14px]" fill="#18a861" stroke="#0d6637">
          <path d="M.5.500h10v3H.5zM3.500 5.500h10v3h-10zM.5 10.500h10v3H.5z" />
        </svg>
        <select aria-label="Renderer" className="flex-1 appearance-none bg-transparent pl-0.5 outline-none">
          <option>Single Symbol</option>
        </select>
      </div>
      <div className="mt-2 flex h-[126px] shrink-0">
        <div className="flex w-[132px] shrink-0 items-center justify-center pr-1.5">
          <span className="size-[61px] border border-[#3a2a10] bg-[#ff9e17]" />
        </div>
        <ul className="flex-1 border border-r-0 border-[#a5a5a5] bg-white font-['Noto_Sans',sans-serif] text-xs">
          <li className="flex h-[19px] items-center bg-[#efefef] pl-1.5 font-bold">
            <Caret />
            <span className="ml-[9px] mr-1.5 size-4 border border-[#a66b1c] bg-[#ff9e17]" />
            Fill
          </li>
          <li className="flex h-[19px] items-center gap-1.5 pl-[43px]">
            <span className="size-4 border border-[#a66b1c] bg-[#ff9e17]" />
            Simple Fill
          </li>
        </ul>
      </div>
      <div className="mt-2 border-t border-[#a5a5a5] pt-2">
        <div className="flex h-[22px] items-center">
          <label htmlFor="color" className="w-12">Color</label>
          <button id="color" aria-label="Color" className="h-[22px] flex-1 rounded-l-sm border border-r-0 border-[#a5a5a5] bg-[#fafafa] py-[2px] pl-1">
            <span className="block h-full rounded-l-sm bg-[#ff9e17]" />
          </button>
        </div>
        <div className="my-2 flex h-[22px] items-center">
          <label htmlFor="opacity" className="w-12">Opacity</label>
          <input
            id="opacity" type="range" defaultValue="100"
            className="ml-px h-[5px] flex-1 appearance-none rounded-l-sm border border-r-0 border-[#a5a5a5] bg-[#fafafa] [&::-webkit-slider-thumb]:opacity-0"
          />
        </div>
        <div className="flex h-[22px] items-center">
          <label htmlFor="unit" className="w-12">Unit</label>
          <select id="unit" className="h-[22px] flex-1 appearance-none rounded-l-sm border border-r-0 border-[#a5a5a5] bg-gradient-to-b from-white to-[#ededed] pl-[3px]">
            <option>Millimeters</option>
          </select>
        </div>
      </div>
      <label className="mt-1 border-t border-[#a5a5a5] pt-1.5">
        <span className="flex h-[22px] items-center gap-1 rounded-l-sm border border-r-0 border-[#a5a5a5] bg-white pl-2.5">
          <Search size={14} className="text-[#888]" />
          <input aria-label="Style filter" defaultValue="Favorites" className="min-w-0 flex-1 outline-none" />
        </span>
      </label>
      <div className="mt-[5px] flex-1 border border-b-0 border-r-0 border-[#a5a5a5] bg-white pl-[5px] pt-1 font-['Noto_Sans',sans-serif]">
        <h3 className="text-[17px] leading-6 font-bold">Project Styles</h3>
      </div>
    </div>
  );
}

function PropertiesDialog() {
  return (
    <section className="absolute bottom-0 left-[597px] right-0 top-[178px] flex flex-col overflow-hidden border-l border-t border-[#8a8a8a] bg-white shadow-[0_0_10px_rgba(0,0,0,0.25)]">
      <header className="flex h-[29px] shrink-0 items-center gap-1.5 pl-2 text-[13px] text-[#999]">
        <QgisLogo />
        <h2>Layer Properties — protected_areas — Symbology</h2>
      </header>
      <div className="flex min-h-0 flex-1">
        <PageList />
        <SymbologyPage />
      </div>
    </section>
  );
}

export default function App() {
  return (
    <div className="relative flex h-screen overflow-hidden bg-black pt-1.5 font-['Noto_Sans',sans-serif]">
      <div className="flex w-0.5 shrink-0 flex-col">
        {DESKTOP.map(([height, backgroundColor], i) => (
          <span key={i} className="shrink-0" style={{ height, backgroundColor }} />
        ))}
      </div>
      <MainWindow />
      <div className="w-[185px] shrink-0" />
      <PropertiesDialog />
      <p className="pointer-events-none absolute bottom-1.5 right-3.5 font-['Liberation_Sans','Noto_Sans_CJK_SC',sans-serif] text-[19px] leading-6 text-[#888]/80">
        CSDN @雷动软件工作室
      </p>
      <p className="pointer-events-none absolute bottom-1 right-1.5 font-['Liberation_Sans','Noto_Sans_CJK_SC',sans-serif] text-[18px] leading-6 text-[#999]/70">
        @稀土掘金技术社区
      </p>
    </div>
  );
}
